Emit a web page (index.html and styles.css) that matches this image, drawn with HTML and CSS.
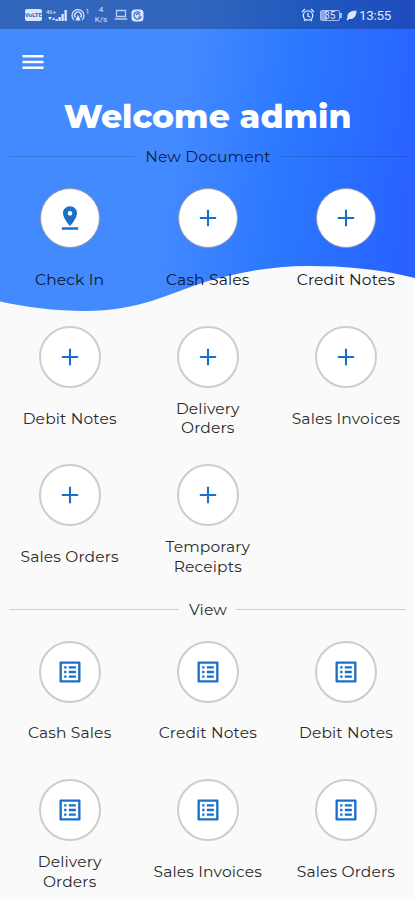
FILE: index.html
```html
<!DOCTYPE html>
<html lang="en">
<head>
    <meta charset="UTF-8">
    <meta name="viewport" content="width=device-width, initial-scale=1.0">
    <title>Welcome</title>
    <link rel="stylesheet" href="styles.css">
</head>
<body>
    <!-- shared icons -->
    <svg class="icon-defs" width="0" height="0">
        <symbol id="icon-add" viewBox="0 0 24 24">
            <path d="M19 12.900h-6.100v6.100h-1.800v-6.100H5v-1.800h6.100V5h1.800v6.100h6.100z"/>
        </symbol>
        <symbol id="icon-pin" viewBox="0 0 24 24">
            <path d="M18 8c0-3.31-2.69-6-6-6S6 4.69 6 8c0 4.5 6 11 6 11s6-6.5 6-11zm-8 0a2 2 0 1 1 4 0 2 2 0 0 1-4 0zM5 20v2h14v-2z"/>
        </symbol>
        <symbol id="icon-list" viewBox="0 0 24 24">
            <path d="M19 5v14H5V5h14m1.1-2H3.9c-.5 0-.9.4-.9.9v16.2c0 .4.4.9.9.9h16.2c.4 0 .9-.5.9-.9V3.9c0-.5-.5-.9-.9-.9zM11 7h6v2h-6V7zm0 4h6v2h-6v-2zm0 4h6v2h-6zM7 7h2v2H7zm0 4h2v2H7zm0 4h2v2H7z"/>
        </symbol>
    </svg>

    <div class="screen">
        <svg class="wave" viewBox="0 0 415 320">
            <defs>
                <linearGradient id="wave-fill" gradientUnits="userSpaceOnUse" x1="0" y1="100" x2="415" y2="160">
                    <stop offset="0.42" stop-color="#448aff"/>
                    <stop offset="0.7" stop-color="#2b78ff"/>
                    <stop offset="1" stop-color="#2962ff"/>
                </linearGradient>
            </defs>
            <path fill="url(#wave-fill)" d="M0 0H415V278C380 269 345 266 308 266C270 266 235 273 205 282C170 293 140 311 85 311C55 311 25 307 0 301.500Z"/>
        </svg>

        <div class="status-bar">
            <div class="status-left">
                <span class="volte">VoLTE</span>
                <svg class="signal" width="22" height="13" viewBox="0 0 22 13">
                    <text x="0" y="5" font-size="6">46+</text>
                    <path d="M2 8l2 3 2-3zM6 11l2-3 1 3zM9.500 12v-2h2.300v2zM12.500 12V8h2.300v4zM15.500 12V5h2.300v7zM18.500 12V1h2.300v11z"/>
                </svg>
                <svg class="hotspot" width="18" height="14" viewBox="0 0 18 14">
                    <g fill="none" stroke="#dbe6ff" stroke-width="1.3">
                        <path d="M3 12A6 6 0 1 1 11 12M4.500 9.500a3.300 3.300 0 1 1 5 0"/>
                    </g>
                    <path d="M7 6.500l2.500 6h-5z"/>
                    <text x="14.5" y="6" font-size="7">1</text>
                </svg>
                <span class="speed">4<br>K/s</span>
                <svg class="laptop" width="14" height="12" viewBox="0 0 14 12">
                    <path fill="none" stroke="#b9cdf5" stroke-width="1.3" d="M2.500 1.500h9v6h-9zM.8 10h12.400"/>
                </svg>
                <svg class="app" width="13" height="13" viewBox="0 0 13 13">
                    <rect x=".5" y=".5" width="12" height="12" rx="3.5"/>
                    <path fill="none" stroke="#3162bd" stroke-width="1.1" d="M9.500 4A3.700 3.700 0 1 0 10 8H7M5 6l2-2 2 2.500"/>
                </svg>
            </div>
            <div class="status-right">
                <svg class="alarm" width="14" height="14" viewBox="0 0 14 14">
                    <g fill="none" stroke="#dbe6ff" stroke-width="1.3">
                        <circle cx="7" cy="7.5" r="4.7"/>
                        <path d="M7 5v3l2 1M1 4l3-3M13 4l-3-3M3 13l1.500-1.500M11 13l-1.500-1.500"/>
                    </g>
                </svg>
                <span class="battery">35</span>
                <svg class="leaf" width="11" height="11" viewBox="0 0 11 11">
                    <path d="M10.500 .5C5 .8 1 2.500 1.500 7.500L.5 10l1 .5 1.500-1.500C8 9.500 10.500 6 10.500 .5z"/>
                </svg>
                <span class="clock">13:55</span>
            </div>
        </div>

        <div class="app-bar">
            <svg class="menu" width="22" height="16" viewBox="0 0 22 16">
                <path d="M.5 1h21v2.400H.5zM.5 6.800h21v2.400H.5zM.5 12.600h21V15H.5z"/>
            </svg>
        </div>

        <h1 class="welcome">Welcome admin</h1>

        <h2 class="section-title dark-line"><span>New Document</span></h2>
        <div class="grid">
            <div class="item on-wave">
                <div class="circle"><svg class="icon"><use href="#icon-pin"/></svg></div>
                <div class="label">Check In</div>
            </div>
            <div class="item on-wave">
                <div class="circle"><svg class="icon"><use href="#icon-add"/></svg></div>
                <div class="label">Cash Sales</div>
            </div>
            <div class="item on-wave">
                <div class="circle"><svg class="icon"><use href="#icon-add"/></svg></div>
                <div class="label">Credit Notes</div>
            </div>
            <div class="item">
                <div class="circle"><svg class="icon"><use href="#icon-add"/></svg></div>
                <div class="label">Debit Notes</div>
            </div>
            <div class="item">
                <div class="circle"><svg class="icon"><use href="#icon-add"/></svg></div>
                <div class="label">Delivery<br>Orders</div>
            </div>
            <div class="item">
                <div class="circle"><svg class="icon"><use href="#icon-add"/></svg></div>
                <div class="label">Sales Invoices</div>
            </div>
            <div class="item">
                <div class="circle"><svg class="icon"><use href="#icon-add"/></svg></div>
                <div class="label">Sales Orders</div>
            </div>
            <div class="item">
                <div class="circle"><svg class="icon"><use href="#icon-add"/></svg></div>
                <div class="label">Temporary<br>Receipts</div>
            </div>
        </div>

        <h2 class="section-title"><span>View</span></h2>
        <div class="grid">
            <div class="item">
                <div class="circle"><svg class="icon"><use href="#icon-list"/></svg></div>
                <div class="label">Cash Sales</div>
            </div>
            <div class="item">
                <div class="circle"><svg class="icon"><use href="#icon-list"/></svg></div>
                <div class="label">Credit Notes</div>
            </div>
            <div class="item">
                <div class="circle"><svg class="icon"><use href="#icon-list"/></svg></div>
                <div class="label">Debit Notes</div>
            </div>
            <div class="item">
                <div class="circle"><svg class="icon"><use href="#icon-list"/></svg></div>
                <div class="label">Delivery<br>Orders</div>
            </div>
            <div class="item">
                <div class="circle"><svg class="icon"><use href="#icon-list"/></svg></div>
                <div class="label">Sales Invoices</div>
            </div>
            <div class="item">
                <div class="circle"><svg class="icon"><use href="#icon-list"/></svg></div>
                <div class="label">Sales Orders</div>
            </div>
        </div>
    </div>
</body>
</html>
```
FILE: styles.css
```css
* {
    box-sizing: border-box;
}
body {
    margin: 0;
    background-color: #fafafa;
    font-family: Montserrat, Inter, sans-serif;
    color: #2a2a2a;
}
.icon-defs {
    position: absolute;
}
.screen {
    position: relative;
    height: 900px;
    overflow: hidden;
}
/* blue background behind the header */
.wave {
    position: absolute;
    top: 0;
    left: 0;
    width: 415px;
    height: 320px;
    z-index: -1;
}
.status-bar {
    display: flex;
    justify-content: space-between;
    align-items: center;
    height: 29px;
    padding: 1px 24px 0 25px;
    background-color: rgba(0, 0, 0, 0.26);
    color: #dbe6ff;
    fill: #dbe6ff;
    font-family: Roboto, sans-serif;
}
.status-left,
.status-right {
    display: flex;
    align-items: center;
}
.volte {
    width: 17px;
    height: 12px;
    margin-right: 4px;
    border-radius: 2px;
    background-color: #dbe6ff;
    color: #3162bd;
    font-size: 6px;
    font-weight: bold;
    line-height: 12px;
    text-align: center;
}
.hotspot {
    margin-left: 3px;
}
.speed {
    width: 16px;
    margin: 0 5px 0 4px;
    font-size: 8px;
    line-height: 10px;
    text-align: center;
}
.app {
    margin-left: 3px;
}
.battery {
    position: relative;
    width: 20px;
    height: 11px;
    margin: 0 6px 0 5px;
    border: 1px solid #a9bdf0;
    border-radius: 2px;
    background: linear-gradient(90deg, #8ba6e4 35%, transparent 35%);
    font-size: 10px;
    line-height: 9px;
    text-align: center;
}
.battery::after {
    content: "";
    position: absolute;
    right: -3px;
    top: 2px;
    width: 2px;
    height: 5px;
    background-color: #a9bdf0;
}
.leaf {
    margin-right: 2px;
}
.clock {
    font-size: 13.5px;
    letter-spacing: -0.3px;
}
.app-bar {
    display: flex;
    align-items: center;
    height: 66px;
    padding-left: 22px;
}
.menu {
    fill: #fff;
}
.welcome {
    height: 42px;
    margin: 0;
    color: #fff;
    font-size: 33px;
    font-weight: 800;
    line-height: 42px;
    text-align: center;
    white-space: nowrap;
}
.section-title {
    display: flex;
    align-items: center;
    height: 38px;
    margin: 0;
    padding: 0 9px;
    font-size: 15.5px;
    font-weight: 400;
    letter-spacing: 0.15px;
}
.section-title::before,
.section-title::after {
    content: "";
    flex: 1;
    height: 1px;
    background-color: #d0d0d0;
}
.section-title span {
    padding: 0 9px 0 10px;
}
.section-title.dark-line {
    color: #101d3c;
}
.dark-line::before,
.dark-line::after {
    background-color: rgba(0, 0, 0, 0.14);
}
.grid {
    display: grid;
    grid-template-columns: repeat(3, 1fr);
    grid-auto-rows: 138.4px;
    padding-left: 0.6px;
}
.item {
    display: flex;
    flex-direction: column;
    align-items: center;
    padding-top: 12.4px;
}
.circle {
    display: flex;
    align-items: center;
    justify-content: center;
    width: 62px;
    height: 62px;
    border: 2px solid #cecccc;
    border-radius: 50%;
    background-color: #fff;
}
.on-wave .circle {
    border-color: #8f98ad;
    border-width: 1px;
    width: 60px;
    height: 60px;
    margin: 1px;
}
.on-wave .label {
    color: #0c1428;
}
.icon {
    width: 28px;
    height: 28px;
    fill: #1a6fc9;
}
.label {
    display: flex;
    align-items: center;
    height: 40px;
    margin-top: 10.6px;
    font-size: 15.5px;
    letter-spacing: 0.15px;
    line-height: 19.5px;
    text-align: center;
    white-space: nowrap;
}
```
